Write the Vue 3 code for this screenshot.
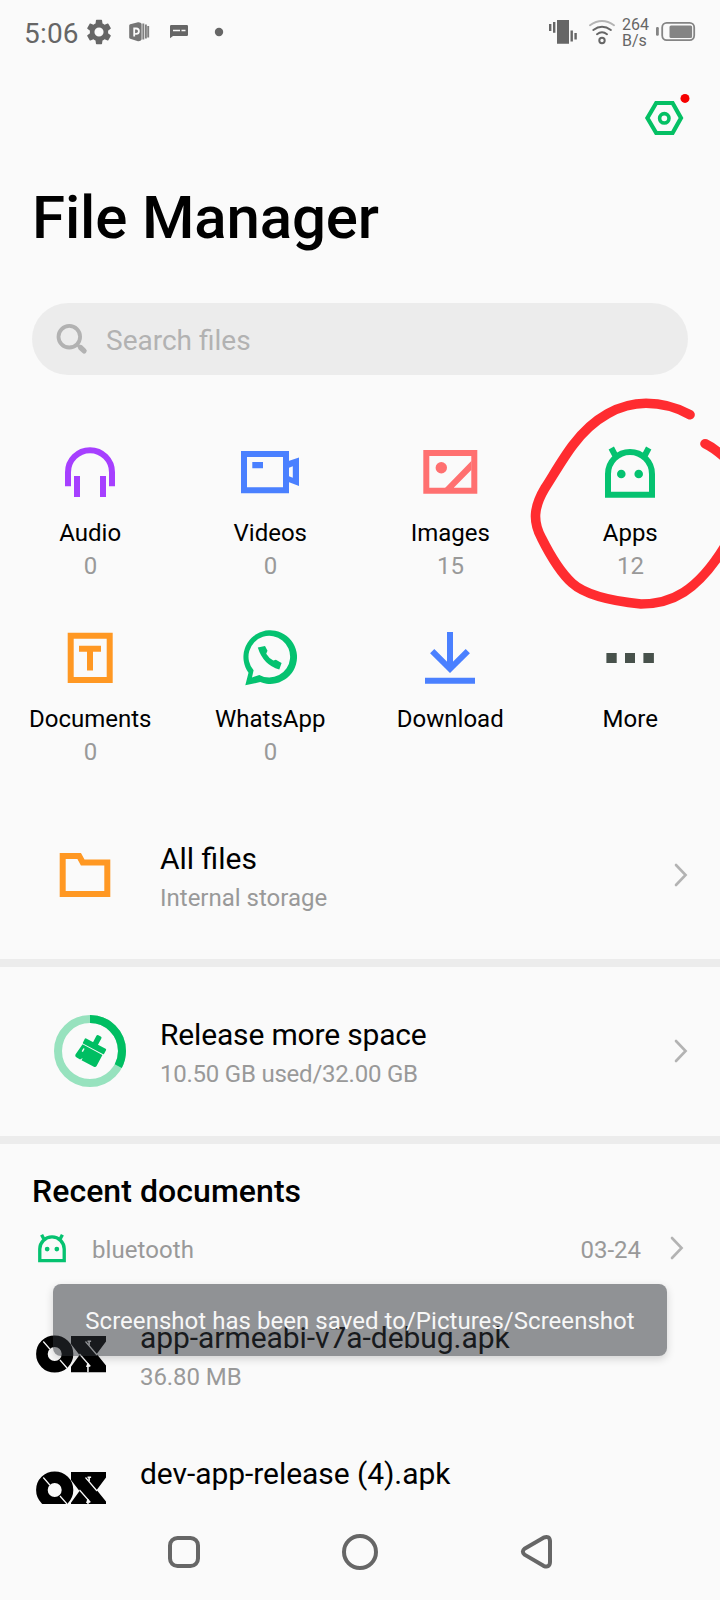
<script setup>
const categories = [
  { id: 'audio', label: 'Audio', count: '0' },
  { id: 'videos', label: 'Videos', count: '0' },
  { id: 'images', label: 'Images', count: '15' },
  { id: 'apps', label: 'Apps', count: '12' },
  { id: 'documents', label: 'Documents', count: '0' },
  { id: 'whatsapp', label: 'WhatsApp', count: '0' },
  { id: 'download', label: 'Download', count: '' },
  { id: 'more', label: 'More', count: '' },
]
const files = [
  { name: 'app-armeabi-v7a-debug.apk', size: '36.80 MB' },
  { name: 'dev-app-release (4).apk', size: '47.48 MB' },
]
</script>

<template>
  <div class="phone">
    <header class="status">
      <span class="clock">5:06</span>
      <svg class="status-left" width="150" height="64" viewBox="80 0 150 64">
        <g transform="translate(83.8 16.8) scale(1.267)">
          <path fill="#666" d="M19.14 12.94c.04-.3.06-.61.06-.94 0-.32-.02-.64-.07-.94l2.03-1.58a.49.49 0 0 0 .12-.61l-1.92-3.32a.488.488 0 0 0-.59-.22l-2.39.96c-.5-.38-1.03-.7-1.62-.94l-.36-2.54a.484.484 0 0 0-.48-.41h-3.84c-.24 0-.43.17-.47.41l-.36 2.54c-.59.24-1.13.57-1.62.94l-2.39-.96c-.22-.08-.47 0-.59.22L2.74 8.87c-.12.21-.08.47.12.61l2.03 1.58c-.05.3-.09.63-.09.94s.02.64.07.94l-2.03 1.58a.49.49 0 0 0-.12.61l1.92 3.32c.12.22.37.29.59.22l2.39-.96c.5.38 1.03.7 1.62.94l.36 2.54c.05.24.24.41.48.41h3.84c.24 0 .44-.17.47-.41l.36-2.54c.59-.24 1.13-.56 1.62-.94l2.39.96c.22.08.47 0 .59-.22l1.92-3.32a.49.49 0 0 0-.12-.61l-2.01-1.58zM12 15.6A3.6 3.6 0 1 1 12 8.4a3.6 3.6 0 0 1 0 7.2z" />
        </g>
        <path fill="#757575" d="M129.200 25.500q0-1 1-1.300l7.800-2q2.800-.2 3.600 1.600v15.600q-.8 2-3.600 1.800l-7.800-2.400q-1-.3-1-1.300z" />
        <path fill="none" stroke="#fafafa" stroke-width="1.800" d="M134.200 36.500V28.500h2a2.700 2.700 0 0 1 0 5.400h-1" />
        <path stroke="#808080" stroke-width="1.900" d="M143.300 23.500v16M145.900 24.500v14M148.200 26v11.500" />
        <path fill="#666" d="M171.200 25h15.600a1.200 1.200 0 0 1 1.200 1.200v8.600a1.200 1.200 0 0 1-1.200 1.200H173l-3 2.200v-12a1.200 1.200 0 0 1 1.200-1.200z" />
        <path stroke="#fafafa" stroke-width="1.500" d="M173 30.500h7M181.500 30.500h4" />
        <circle cx="219" cy="32" r="4.200" fill="#666" />
      </svg>
      <span class="spacer"></span>
      <svg width="70" height="64" viewBox="547 0 70 64">
        <path fill="#666" d="M549 24h2.400v7H549zM553 22h2.400v10.700H553zM557 20h12v23.800h-12zM570.500 30.600h2.400v10.800h-2.400zM574.400 33h2.400v6.600h-2.400z" />
        <g fill="none" stroke="#666" stroke-width="2" stroke-linecap="round">
          <path stroke="#b4b4b4" d="M590 25.200q12-8.400 24 0" />
          <path d="M593.300 30q8.700-6.400 17.600 0" />
          <path d="M597 34.200q5-3.800 10 0" />
          <circle cx="602" cy="40.500" r="2.700" />
        </g>
      </svg>
      <span class="net"><span>264</span><span>B/s</span></span>
      <svg width="42" height="64" viewBox="654 0 42 64">
        <rect x="656" y="27" width="2.800" height="8.800" rx="1.200" fill="#848484" />
        <rect x="662.200" y="22.900" width="32" height="17.200" rx="4.500" fill="none" stroke="#848484" stroke-width="1.800" />
        <rect x="669.500" y="25.500" width="22.600" height="12.400" rx="1.500" fill="#848484" />
      </svg>
    </header>

    <div class="actions">
      <svg width="60" height="60" viewBox="0 0 60 60" fill="none" stroke="#04c064">
        <path stroke-width="4.200" d="M16.200 15h16.400l8.400 15-8.400 15H16.200L7.400 30z" />
        <circle cx="24.300" cy="30.300" r="4.700" stroke-width="3.600" />
        <circle cx="45" cy="10.400" r="4.500" fill="#f60000" stroke="none" />
      </svg>
    </div>
    <h1>File Manager</h1>

    <div class="search">
      <svg width="32" height="32" viewBox="0 0 32 32" fill="none" stroke="#b2b2b2">
        <circle cx="13.300" cy="13.700" r="10.800" stroke-width="3.800" />
        <path d="M24.500 24.500l3.600 3.400" stroke-width="5.200" stroke-linecap="round" />
        <path d="M20.500 21l4 3.500" stroke-width="3" />
      </svg>
      <span>Search files</span>
    </div>

    <section class="grid">
      <div v-for="c in categories" :key="c.id" class="cell">
        <svg width="72" height="72" viewBox="0 0 72 72" fill="none" stroke-width="6">
          <g v-if="c.id === 'audio'" stroke="#a63fff">
            <path d="M14 50.300v-14a22 22 0 0 1 44 0v14M23 40v21M49 40v21" />
          </g>
          <g v-else-if="c.id === 'videos'">
            <path stroke="#4a80ff" d="M10 18h42v36.300H10z" />
            <path fill="#4a80ff" fill-rule="evenodd" d="M18.300 26H29v6.300H18.300zM54.500 25L65 21.500V50l-10.500-4zM55 31.700v8.600l3.800 1.500V30.200z" />
          </g>
          <g v-else-if="c.id === 'images'">
            <path stroke="#ff7070" d="M12.300 17h48v37.700h-48z" />
            <circle cx="27.300" cy="31.700" r="5.700" fill="#ff7070" />
            <path fill="#ff7070" d="M57.500 24.700v9L40 51.500v.5h-9z" />
          </g>
          <g v-else-if="c.id === 'apps'">
            <path stroke="#05c270" d="M14 58.700V38a22 22 0 0 1 44 0v20.700zM17.300 12l5 9.500M54.700 12l-5 9.500" />
            <path fill="#05c270" d="M27.300 33.700a4.300 4.300 0 1 1 0 8.600 4.300 4.300 0 0 1 0-8.600zM44.700 33.700a4.300 4.300 0 1 1 0 8.600 4.300 4.300 0 0 1 0-8.600z" />
          </g>
          <g v-else-if="c.id === 'documents'" stroke="#ff9823">
            <path d="M16.700 13.700h39V58h-39zM25 26.700h22M36 27v21.400" />
          </g>
          <g v-else-if="c.id === 'whatsapp'" fill="#05c270" transform="translate(-.7 -.7)">
            <path fill-rule="evenodd" d="M12 64l3.200-12.500A26.800 26.800 0 1 1 27 60.700zM18.700 56.300l7.300-2.700A20.800 20.800 0 1 0 20.300 49z" />
            <path d="M24.500 26.200l7.200-1.500 2.500 4.800-1.300 2.900Q35.500 36.700 40 39.300l2.600-.8 5.700 3.300-2.300 6.400Q30 43.800 24.500 26.200z" />
          </g>
          <g v-else-if="c.id === 'download'" stroke="#4a80ff">
            <path d="M36 10v37M18.200 29.200L36 46.800l17.800-17.600M11 58.700h50" />
          </g>
          <path v-else fill="#47514b" d="M12.400 31h10.300v10H12.400zM31 31h10v10H31zM49.400 31h10.500v10H49.400z" />
        </svg>
        <span class="label">{{ c.label }}</span>
        <span class="count">{{ c.count }}</span>
      </div>
    </section>

    <section class="row files-row">
      <svg width="72" height="72" viewBox="54 839 72 72" fill="none">
        <path stroke="#ff9823" stroke-width="6" d="M62.700 856h16.500l3.500 6.400h24.600V894H62.700z" />
      </svg>
      <div class="row-text"><b>All files</b><span>Internal storage</span></div>
      <svg class="chev" width="16" height="26" viewBox="0 0 16 26"><path d="M4 3l9.600 10L4 23" /></svg>
    </section>
    <section class="row space-row">
      <svg width="72" height="72" viewBox="0 0 72 72" fill="none">
        <circle cx="36" cy="36" r="32" stroke="#97e2be" stroke-width="8" />
        <circle cx="36" cy="36" r="32" stroke="#00be62" stroke-width="8" pathLength="360" stroke-dasharray="118 360" transform="rotate(-90 36 36)" />
        <g transform="translate(39 33.200) rotate(28)" fill="#00be62">
          <rect x="-2.800" y="-14" width="5.600" height="11" rx="1.500" />
          <rect x="-11.600" y="-5.400" width="24" height="6" rx="1" />
          <path d="M-11 1.500h22.500v12.500q0 2-2 2H-4.500v-2.500l-1.600 2.500h-3.400q-3 0-3-2.500z" />
          <path fill="#fafafa" d="M-8.500 4.500h1.400v3.600h-1.400z" />
        </g>
      </svg>
      <div class="row-text tight"><b>Release more space</b><span>10.50 GB used/32.00 GB</span></div>
      <svg class="chev" width="16" height="26" viewBox="0 0 16 26"><path d="M4 3l9.600 10L4 23" /></svg>
    </section>

    <section class="recent">
      <h2>Recent documents</h2>
      <div class="group">
        <svg width="40" height="40" viewBox="0 0 72 72" fill="none" stroke-width="6">
          <path stroke="#05c270" d="M14 58.700V38a22 22 0 0 1 44 0v20.700zM17.300 12l5 9.500M54.700 12l-5 9.500" />
          <path fill="#05c270" d="M27.300 33.700a4.300 4.300 0 1 1 0 8.600 4.300 4.300 0 0 1 0-8.600zM44.700 33.700a4.300 4.300 0 1 1 0 8.600 4.300 4.300 0 0 1 0-8.600z" />
        </svg>
        <span class="group-name">bluetooth</span>
        <span class="date">03-24</span>
        <svg class="chev" width="16" height="26" viewBox="0 0 16 26"><path d="M4 3l9.600 10L4 23" /></svg>
      </div>
      <div v-for="f in files" :key="f.name" class="file">
        <svg width="72" height="40" viewBox="35 1334 72 40">
          <circle cx="54.700" cy="1354" r="12.800" fill="none" stroke="#000" stroke-width="11.600" />
          <path d="M71 1336h35v5.500l-9.300 12.500 9.300 11.500v6.700H71v-5.500l8.500-11.700-8.500-11z" />
          <path stroke="#fafafa" stroke-width="1.200" d="M43.300 1341.500l6.500 7.500M60 1360l7 8M85.500 1341.500l11.500 13.500M79.500 1354l10.500 12" />
          <path fill="#fafafa" d="M87.500 1340.500h3.600v1.600h-1.200v3.200h-1.600v-3.200h-.8zM86 1367l1.500-4.500 1.500 1.200v1.400h1.300v1.700h-1.600v5.500h-1.500V1367z" />
        </svg>
        <div class="file-text"><b>{{ f.name }}</b><span>{{ f.size }}</span></div>
      </div>
    </section>

    <nav class="nav">
      <svg width="720" height="96" viewBox="0 1504 720 96" fill="none" stroke="#666" stroke-width="4">
        <rect x="170" y="1538" width="28" height="28" rx="7.500" />
        <circle cx="360" cy="1552" r="16" />
        <path stroke-linejoin="round" d="M543.500 1537.700L524.500 1548.800q-3.300 2.700 0 5.800l19 11.200q6.200 2.500 6.500-3.800v-21q-.5-5.700-6.500-3.300z" />
      </svg>
    </nav>

    <div class="toast">Screenshot has been saved to/Pictures/Screenshot</div>
    <svg class="scribble" width="200" height="220" viewBox="520 395 200 220">
      <path d="M690 414.700C676 407 662 403.300 646 403.300C620 403.500 594 417 573 445C563 458 551 479 545 488C533 508 533 522 541.500 538C549 553 561 573 572 583C583 593 606 600.500 641 604C671 604 697 592 725 546M705 443.700Q714 448 724 457" />
    </svg>
  </div>
</template>

<style>
body { margin: 0; background: #fafafa; }
</style>
<style scoped>
.phone { position: relative; width: 720px; height: 1600px; overflow: hidden; display: flex; flex-direction: column; background: #fafafa; color: #000; font-family: Roboto, sans-serif; }
.phone > * { flex-shrink: 0; }
svg { display: block; flex-shrink: 0; }
.status { display: flex; height: 64px; padding-left: 24px; padding-right: 24px; color: #666; }
.clock { width: 56px; font-size: 28px; line-height: 67px; letter-spacing: 0.2px; white-space: nowrap; }
.spacer { flex: 1; }
.net { display: flex; flex-direction: column; width: 32px; margin-left: 5px; padding-top: 17px; font-size: 16px; line-height: 16px; }
.actions { display: flex; justify-content: flex-end; height: 119px; padding: 24px 20px 0 0; box-sizing: border-box; }
h1 { margin: 0; padding-left: 32px; height: 120px; font-size: 60px; font-weight: 500; line-height: 70px; letter-spacing: -0.15px; }
.search { display: flex; align-items: center; height: 72px; margin: 0 32px; padding-left: 24px; box-sizing: border-box; border-radius: 36px; background: #ececec; color: #b2b2b2; font-size: 28px; line-height: 72px; }
.search span { margin-left: 18px; padding-top: 3px; }
.grid { display: grid; grid-template-columns: repeat(4, 180px); grid-auto-rows: 186px; height: 431px; padding-top: 61px; box-sizing: border-box; }
.cell { display: flex; flex-direction: column; align-items: center; font-size: 24px; }
.label { margin-top: 9px; padding-left: 0.5px; line-height: 32px; }
.count { padding-left: 1px; line-height: 35px; color: #999; }
.row { display: flex; align-items: center; box-sizing: border-box; padding: 0 32px 0 54px; border-bottom: 8px solid #ececec; }
.files-row { height: 161px; padding-bottom: 15px; }
.space-row { height: 177px; padding-bottom: 1px; }
.row-text { display: flex; flex-direction: column; flex: 1; margin-left: 34px; padding-top: 6px; }
b { font-weight: 400; font-size: 30px; line-height: 40px; }
.row-text span, .file-text span { font-size: 24px; line-height: 38px; color: #999; }
.tight b { letter-spacing: -0.17px; }
.tight span { letter-spacing: -0.23px; }
.chev path { fill: none; stroke: #b3b3b3; stroke-width: 2.6; stroke-linecap: round; stroke-linejoin: miter; }
.recent { height: 360px; overflow: hidden; }
h2 { margin: 0; padding: 27px 0 0 32px; font-size: 32px; font-weight: 500; line-height: 40px; letter-spacing: 0.06px; }
.group { display: flex; align-items: center; height: 40px; margin: 17px 0 18px; padding: 0 36px 0 32px; font-size: 24px; color: #999; }
.group-name { flex: 1; margin-left: 20px; padding-top: 3px; letter-spacing: 0.08px; }
.date { margin-right: 27px; padding-top: 3px; }
.file { display: flex; align-items: center; height: 136px; padding-left: 35px; }
.file-text { display: flex; flex-direction: column; margin-left: 33px; padding-top: 6px; letter-spacing: -0.06px; }
.nav { height: 96px; }
.toast { position: absolute; left: 53px; top: 1284px; width: 614px; height: 72px; border-radius: 8px; box-sizing: border-box; background: rgba(46, 49, 56, .52); color: #f7f7f7; font-size: 24px; line-height: 74px; letter-spacing: 0.04px; text-align: center; white-space: nowrap; box-shadow: 0 3px 8px rgba(0, 0, 0, .16); }
.scribble { position: absolute; left: 520px; top: 395px; }
.scribble path { fill: none; stroke: #ff2c30; stroke-width: 9.600; stroke-linecap: round; stroke-linejoin: round; }
</style>
